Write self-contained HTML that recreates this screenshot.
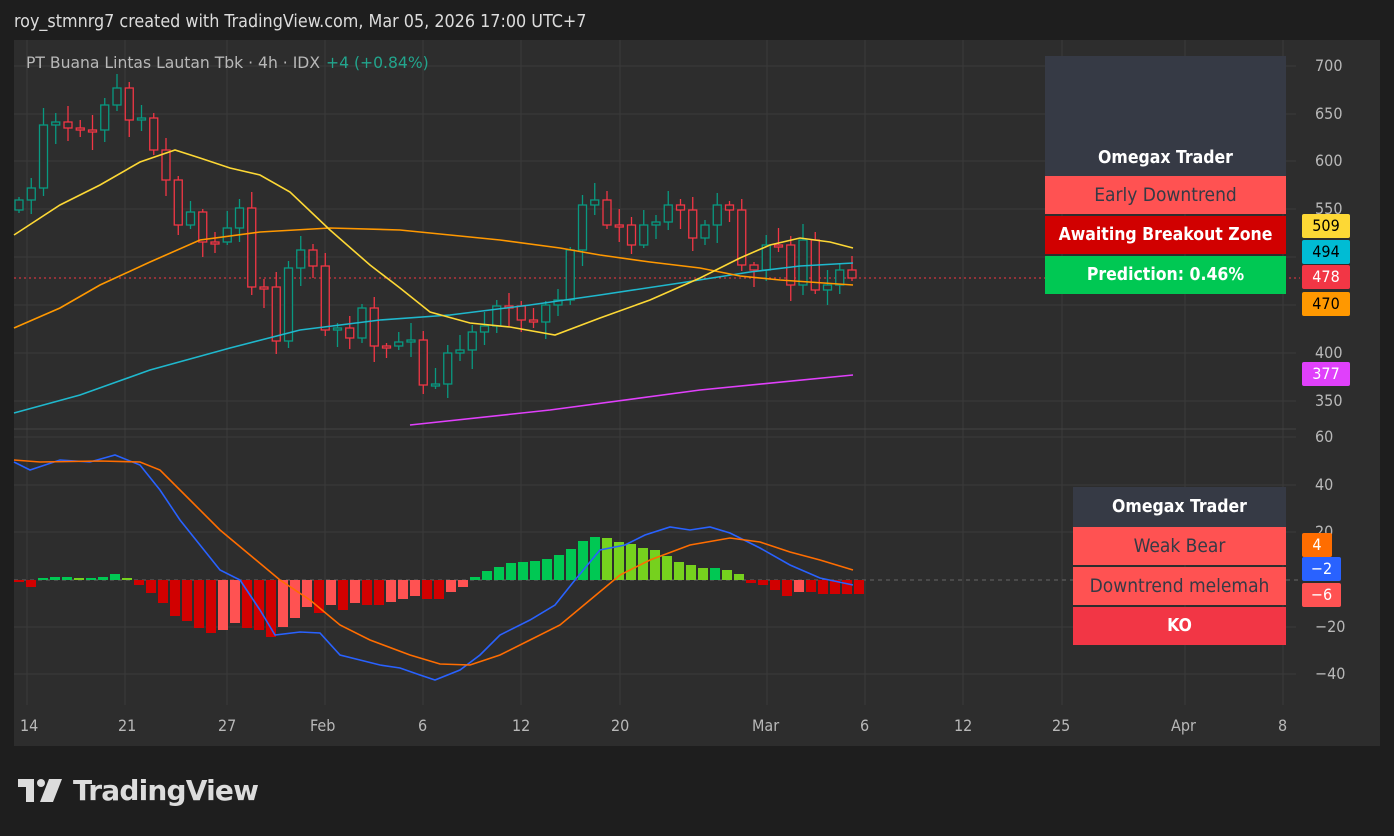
<!DOCTYPE html>
<html><head><meta charset="utf-8"><style>
html,body{margin:0;padding:0;background:#1e1e1e;width:1394px;height:836px;overflow:hidden;font-family:"Liberation Sans","DejaVu Sans",sans-serif}
.hdr{position:absolute;left:14px;top:11px;color:#dcdcdc;font-size:17.8px;font-family:"DejaVu Sans Condensed","Liberation Sans",sans-serif}
#panel{position:absolute;left:14px;top:40px;width:1366px;height:706px;background:#2d2d2d}
.title{position:absolute;left:26px;top:54px;color:#b8b8b8;font-size:15.6px;font-family:"DejaVu Sans","Liberation Sans",sans-serif}
.title span{color:#22a58d;margin-left:6px}
.box{position:absolute;display:flex;align-items:center;justify-content:center;font-family:"DejaVu Sans Condensed","Liberation Sans",sans-serif;font-size:19px}
.b{font-weight:bold;font-size:17.5px}
.lbl{position:absolute;font-family:"DejaVu Sans Condensed","Liberation Sans",sans-serif;font-size:16px;color:#b8b8b8}
.tag{position:absolute;left:1302px;width:48px;height:24px;line-height:24px;font-size:16px;text-align:center;font-family:"DejaVu Sans Condensed","Liberation Sans",sans-serif;border-radius:2px}
.logo{position:absolute;left:18px;top:774px;color:#dcdcdc;font-size:28px;font-weight:bold;font-family:"DejaVu Sans","Liberation Sans",sans-serif;letter-spacing:-0.8px}
</style></head><body>
<div class="hdr">roy_stmnrg7 created with TradingView.com, Mar 05, 2026 17:00 UTC+7</div>
<div id="panel"></div>
<svg id="s" width="1394" height="836" style="position:absolute;left:0;top:0">
<g stroke="#3a3a3a" stroke-width="1">
<line x1="14" x2="1296" y1="66" y2="66"/><line x1="14" x2="1296" y1="114" y2="114"/><line x1="14" x2="1296" y1="161" y2="161"/><line x1="14" x2="1296" y1="209" y2="209"/><line x1="14" x2="1296" y1="257" y2="257"/><line x1="14" x2="1296" y1="305" y2="305"/><line x1="14" x2="1296" y1="353" y2="353"/><line x1="14" x2="1296" y1="401" y2="401"/>
<line x1="14" x2="1296" y1="437" y2="437"/><line x1="14" x2="1296" y1="485" y2="485"/><line x1="14" x2="1296" y1="532" y2="532"/><line x1="14" x2="1296" y1="627" y2="627"/><line x1="14" x2="1296" y1="674" y2="674"/>
<line x1="27" x2="27" y1="40" y2="705"/><line x1="125" x2="125" y1="40" y2="705"/><line x1="227" x2="227" y1="40" y2="705"/><line x1="325" x2="325" y1="40" y2="705"/><line x1="423" x2="423" y1="40" y2="705"/><line x1="521" x2="521" y1="40" y2="705"/><line x1="620" x2="620" y1="40" y2="705"/><line x1="767" x2="767" y1="40" y2="705"/><line x1="865" x2="865" y1="40" y2="705"/><line x1="963" x2="963" y1="40" y2="705"/><line x1="1062" x2="1062" y1="40" y2="705"/><line x1="1185" x2="1185" y1="40" y2="705"/><line x1="1283" x2="1283" y1="40" y2="705"/>
</g>
<line x1="14" x2="1296" y1="429" y2="429" stroke="#444" stroke-width="1"/>
<line x1="14" x2="1300" y1="580" y2="580" stroke="#666" stroke-dasharray="4 4"/>
<line x1="14" x2="1300" y1="278" y2="278" stroke="#f23645" stroke-dasharray="2 3"/>
<g id="hist"></g>
<g id="cand"></g>
<g fill="none" stroke-width="1.6">
<polyline stroke="#e040fb" points="410,425 550,410 700,390 853,375"/>
<polyline stroke="#1fb8cd" points="14,413 80,395 150,370 230,348 300,330 380,320 450,315 530,305 600,295 680,283 750,272 800,266 853,263"/>
<polyline stroke="#ff9800" points="14,328 60,308 100,285 150,262 200,240 260,232 330,228 400,230 460,236 500,240 560,248 600,255 650,262 700,268 740,276 780,280 853,285"/>
<polyline stroke="#fdd835" points="14,235 60,205 100,185 140,162 175,150 200,158 230,168 260,175 290,192 330,230 370,265 400,288 430,312 470,323 510,327 555,335 600,318 650,300 700,278 740,258 770,245 800,238 830,242 853,248"/>
<polyline stroke="#2962ff" points="14,462 30,470 60,460 90,462 115,455 140,465 160,490 180,520 200,545 220,570 240,580 260,610 275,635 300,632 320,633 340,655 360,660 380,665 400,668 420,675 435,680 460,670 480,655 500,635 530,620 555,605 575,580 600,550 625,545 645,535 670,527 690,530 710,527 730,533 760,548 790,565 820,578 853,585"/>
<polyline stroke="#ff6d00" points="14,460 40,462 100,461 140,462 160,470 190,500 220,530 250,555 280,580 310,600 340,625 370,640 410,655 440,664 470,665 500,655 530,640 560,625 590,600 620,575 650,560 690,545 730,538 760,542 790,552 820,560 853,570"/>
</g>
</svg>
<div class="title">PT Buana Lintas Lautan Tbk · 4h · IDX<span>+4 (+0.84%)</span></div>

<div class="box b" style="left:1045px;top:56px;width:241px;height:120px;background:#363a45;color:#fff;align-items:flex-end"><div style="margin-bottom:8px">Omegax Trader</div></div>
<div class="box" style="left:1045px;top:176px;width:241px;height:38px;background:#ff5252;color:#363a45">Early Downtrend</div>
<div class="box b" style="left:1045px;top:216px;width:241px;height:38px;background:#d10000;color:#fff">Awaiting Breakout Zone</div>
<div class="box b" style="left:1045px;top:256px;width:241px;height:38px;background:#00c853;color:#fff">Prediction: 0.46%</div>

<div class="box b" style="left:1073px;top:487px;width:213px;height:40px;background:#363a45;color:#fff">Omegax Trader</div>
<div class="box" style="left:1073px;top:527px;width:213px;height:38px;background:#ff5252;color:#363a45">Weak Bear</div>
<div class="box" style="left:1073px;top:567px;width:213px;height:38px;background:#ff5252;color:#363a45">Downtrend melemah</div>
<div class="box b" style="left:1073px;top:607px;width:213px;height:38px;background:#f23645;color:#fff">KO</div>

<div class="lbl" style="left:1315px;top:56px">700</div>
<div class="lbl" style="left:1315px;top:104px">650</div>
<div class="lbl" style="left:1315px;top:151px">600</div>
<div class="lbl" style="left:1315px;top:199px">550</div>
<div class="lbl" style="left:1315px;top:343px">400</div>
<div class="lbl" style="left:1315px;top:391px">350</div>
<div class="lbl" style="left:1315px;top:427px">60</div>
<div class="lbl" style="left:1315px;top:475px">40</div>
<div class="lbl" style="left:1315px;top:522px">20</div>
<div class="lbl" style="left:1315px;top:617px">−20</div>
<div class="lbl" style="left:1315px;top:664px">−40</div>
<div class="tag" style="top:214px;background:#fdd835;color:#000">509</div>
<div class="tag" style="top:240px;background:#00bcd4;color:#000">494</div>
<div class="tag" style="top:265px;background:#f23645;color:#fff">478</div>
<div class="tag" style="top:292px;background:#ff9800;color:#000">470</div>
<div class="tag" style="top:362px;background:#e040fb;color:#fff">377</div>
<div class="tag" style="top:533px;width:30px;background:#ff6d00;color:#fff">4</div>
<div class="tag" style="top:557px;width:39px;background:#2962ff;color:#fff">−2</div>
<div class="tag" style="top:583px;width:39px;background:#ff5252;color:#fff">−6</div>

<div class="lbl" style="left:20px;top:716px">14</div>
<div class="lbl" style="left:118px;top:716px">21</div>
<div class="lbl" style="left:218px;top:716px">27</div>
<div class="lbl" style="left:310px;top:716px">Feb</div>
<div class="lbl" style="left:418px;top:716px">6</div>
<div class="lbl" style="left:512px;top:716px">12</div>
<div class="lbl" style="left:611px;top:716px">20</div>
<div class="lbl" style="left:752px;top:716px">Mar</div>
<div class="lbl" style="left:860px;top:716px">6</div>
<div class="lbl" style="left:954px;top:716px">12</div>
<div class="lbl" style="left:1052px;top:716px">25</div>
<div class="lbl" style="left:1171px;top:716px">Apr</div>
<div class="lbl" style="left:1278px;top:716px">8</div>

<svg style="position:absolute;left:18px;top:779px" width="46" height="23" viewBox="0 0 46 23"><path d="M0 0H16V23H8V8H0Z" fill="#dcdcdc"/><circle cx="23" cy="4" r="4" fill="#dcdcdc"/><path d="M31 0H44L35 23H22Z" fill="#dcdcdc"/></svg>
<div class="logo" style="left:73px">TradingView</div>

<script>
var C=[200,188,125,122,128,130,130,105,88,120,118,150,180,225,212,242,242,228,208,287,287,341,268,250,266,330,328,338,308,346,346,342,340,385,384,353,350,332,326,306,306,320,322,305,300,250,205,200,225,225,245,225,222,205,210,238,225,205,210,265,270,245,245,285,240,290,285,270,278];
var g=document.getElementById('cand'),h="";
for(var i=0;i<C.length;i++){var x=19+i*12.25,c=C[i],o=i?C[i-1]:210;
var up=c<o,col=up?"#089981":"#f23645",t=Math.min(o,c),b=Math.max(o,c);if(b-t<2){b=t+2;}
var hi=t-((i*7)%15+3),lo=b+((i*11)%17+3);
h+='<line x1="'+x+'" x2="'+x+'" y1="'+hi+'" y2="'+lo+'" stroke="'+col+'" stroke-width="1.3"/>';
h+='<rect x="'+(x-4)+'" y="'+t+'" width="8" height="'+(b-t)+'" fill="#2d2d2d" stroke="'+col+'" stroke-width="1.3"/>';}
g.innerHTML=h;
var H=[-2,-7,2,3,3,2,2,3,6,2,-5,-13,-23,-36,-41,-48,-53,-50,-43,-48,-50,-57,-47,-38,-27,-33,-25,-30,-23,-25,-25,-22,-19,-16,-19,-19,-12,-7,3,9,13,17,18,19,21,25,31,39,43,42,38,36,32,30,24,18,15,12,12,10,6,-3,-5,-10,-16,-12,-12,-14,-14,-14,-14];
var s="";for(var i=0;i<H.length;i++){var x=19+i*12.0,v=H[i],p=i?H[i-1]:0,col;
if(v>=0)col=(v>=p)?"#00c853":"#76d11e";else col=(v<=p)?"#d10000":"#ff5252";
var y=v>=0?580-v:580,hh=Math.max(Math.abs(v),1);s+='<rect x="'+(x-5)+'" y="'+y+'" width="10" height="'+hh+'" fill="'+col+'"/>';}
document.getElementById('hist').innerHTML=s;
</script>
</body></html>
